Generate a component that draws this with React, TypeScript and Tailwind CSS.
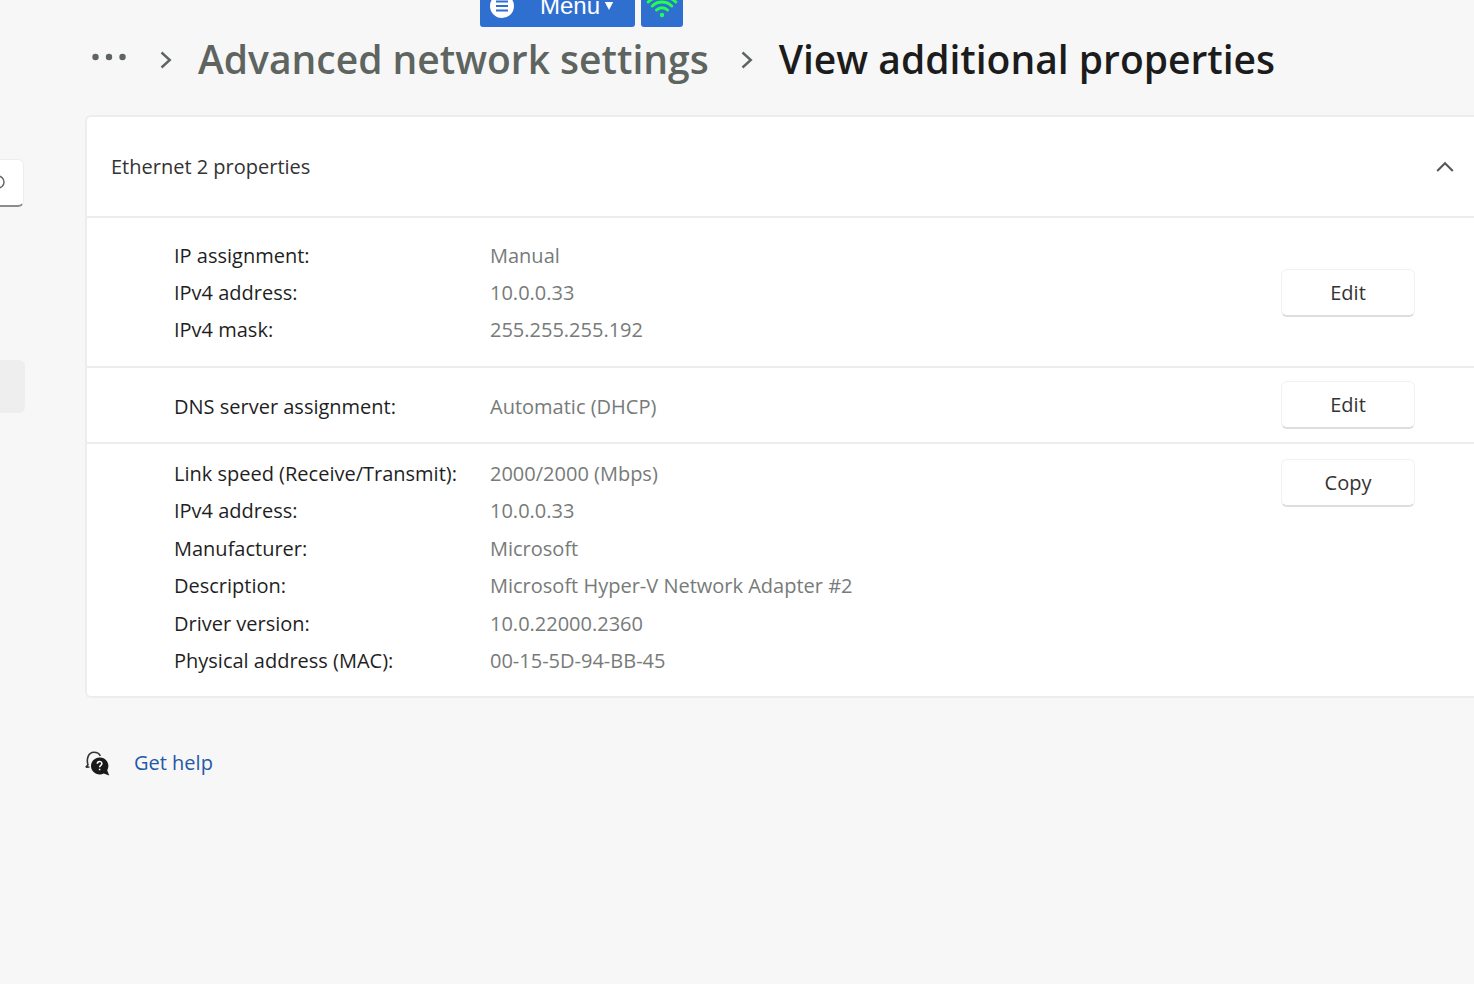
import { Fragment } from "react";

type Row = { label: string; value: string };

const ipRows: Row[] = [
  { label: "IP assignment:", value: "Manual" },
  { label: "IPv4 address:", value: "10.0.0.33" },
  { label: "IPv4 mask:", value: "255.255.255.192" },
];

const dnsRows: Row[] = [{ label: "DNS server assignment:", value: "Automatic (DHCP)" }];

const adapterRows: Row[] = [
  { label: "Link speed (Receive/Transmit):", value: "2000/2000 (Mbps)" },
  { label: "IPv4 address:", value: "10.0.0.33" },
  { label: "Manufacturer:", value: "Microsoft" },
  { label: "Description:", value: "Microsoft Hyper-V Network Adapter #2" },
  { label: "Driver version:", value: "10.0.22000.2360" },
  { label: "Physical address (MAC):", value: "00-15-5D-94-BB-45" },
];

function Properties({ rows, className }: { rows: Row[]; className: string }) {
  return (
    <dl className={`grid flex-1 auto-rows-fr grid-cols-[316px_1fr] items-center ${className}`}>
      {rows.map((row) => (
        <Fragment key={row.label}>
          <dt className="whitespace-nowrap text-[#1f1f1f]">{row.label}</dt>
          <dd className="text-[#777b79]">{row.value}</dd>
        </Fragment>
      ))}
    </dl>
  );
}

function ActionButton({ children }: { children: string }) {
  return (
    <button
      type="button"
      className="h-12 w-[134px] shrink-0 rounded-md border border-[#f0f2f1] border-b-2 border-b-[#dcdedd] bg-white text-[#333]"
    >
      {children}
    </button>
  );
}

function Chevron() {
  return (
    <svg viewBox="0 0 12 18" className="h-[18px] w-3" fill="none" stroke="#5e6460" strokeWidth="2.4" aria-hidden="true">
      <path d="M1.500 1.500 9.800 9l-8.300 7.500" />
    </svg>
  );
}

function RemoteMenu() {
  return (
    <div className="absolute -top-4 left-[480px] flex gap-1.5 font-['Liberation_Sans',sans-serif]">
      <button type="button" className="flex h-[43px] w-[155px] items-center rounded-[3px] bg-[#2f6fd0] pl-2.5 text-2xl text-white">
        <svg viewBox="0 0 24 24" className="size-6" aria-hidden="true">
          <circle cx="12" cy="12" r="12" fill="#fff" />
          <path d="M6 7.500h12M6 12h12M6 16.500h12" stroke="#2f6fd0" strokeWidth="2" />
        </svg>
        <span className="ml-[26px]">Menu</span>
        <svg viewBox="0 0 10 8" className="ml-1 h-2 w-2.5" aria-hidden="true">
          <path d="M.8 0h8.400L5 8z" fill="#fff" />
        </svg>
      </button>
      <button type="button" aria-label="Connection quality" className="flex h-[43px] w-[42px] items-end justify-center rounded-[3px] bg-[#2f6fd0] pb-2">
        <svg viewBox="0 0 36 28" className="h-7 w-9" fill="none" stroke="#22ff4e" strokeWidth="3" strokeLinecap="round" aria-hidden="true">
          <path d="M12.500 19a8 8 0 0 1 11 0M8.300 15a14 14 0 0 1 19.400 0M4.200 11a20 20 0 0 1 27.600 0" />
          <circle cx="18" cy="24" r="2.200" fill="#22ff4e" stroke="none" />
        </svg>
      </button>
    </div>
  );
}

export default function App() {
  return (
    <div className="relative flex min-h-screen overflow-hidden bg-[#f7f7f7] font-['Open_Sans','Noto_Sans',sans-serif] text-xl">
      <RemoteMenu />

      <aside className="w-[85px] shrink-0 pt-[159px]">
        <button
          type="button"
          aria-label="Search"
          className="flex h-12 w-6 items-center rounded-r-md border border-l-0 border-[#ededed] border-b-2 border-b-[#8c8c8c] bg-white"
        >
          <svg viewBox="0 0 8 16" className="h-4 w-2" fill="none" stroke="#666" strokeWidth="1.500" aria-hidden="true">
            <circle cx="-2" cy="7" r="6" />
          </svg>
        </button>
        <button type="button" aria-label="Network" className="mt-[153px] block h-[53px] w-[25px] rounded-r-md bg-[#eeeeee]" />
      </aside>

      <main className="min-w-0 flex-1">
        <nav aria-label="Breadcrumb" className="flex h-[115px] items-center whitespace-nowrap pl-[7px] pt-1 text-[39px] font-semibold">
          <button type="button" aria-label="More">
            <svg viewBox="0 0 36 16" className="h-4 w-9" fill="#5e6460" aria-hidden="true">
              <circle cx="3.500" cy="5" r="3.200" />
              <circle cx="17" cy="5" r="3.200" />
              <circle cx="30.500" cy="5" r="3.200" />
            </svg>
          </button>
          <span className="ml-8">
            <Chevron />
          </span>
          <a href="#advanced" className="ml-[26px] text-[#5e6460]">
            Advanced network settings
          </a>
          <span className="ml-8">
            <Chevron />
          </span>
          <h1 className="ml-[26px] text-[#1c1c1c]">View additional properties</h1>
        </nav>

        <section className="divide-y-2 divide-[#eceeed] rounded-l-md border-y-2 border-l-2 border-[#eceeed] bg-white">
          <button type="button" aria-expanded="true" className="flex h-[101px] w-full items-center justify-between pl-6 pr-5 text-[#333]">
            <span>Ethernet 2 properties</span>
            <svg viewBox="0 0 18 12" className="h-3 w-[18px]" fill="none" stroke="#555" strokeWidth="2" aria-hidden="true">
              <path d="M1.200 10 9 2.200l7.800 7.800" />
            </svg>
          </button>
          <div className="flex items-center pb-[17px] pl-[87px] pr-[59px] pt-[19px]">
            <Properties rows={ipRows} className="min-h-[112px]" />
            <ActionButton>Edit</ActionButton>
          </div>
          <div className="flex items-center py-[13px] pl-[87px] pr-[59px]">
            <Properties rows={dnsRows} className="pt-1" />
            <ActionButton>Edit</ActionButton>
          </div>
          <div className="flex items-start pb-4 pl-[87px] pr-[59px] pt-[11px]">
            <Properties rows={adapterRows} className="min-h-[225px]" />
            <div className="flex pt-1">
              <ActionButton>Copy</ActionButton>
            </div>
          </div>
        </section>

        <a href="#help" className="mt-[51px] inline-flex items-center gap-6 text-[#2459a6]">
          <svg viewBox="0 0 25 25" className="size-[25px]" fill="none" aria-hidden="true">
            <path d="M.8 16.200 3 13.800C1.200 8 3.200 1.200 9 1.200c3 0 5.200 1.300 6.300 3.600M.8 16.200 4.500 16" stroke="#333" strokeWidth="1.600" />
            <path d="M14.500 6.500a8.500 8.500 0 1 0 4.200 15.900l5.500 2.100-2-5.300A8.500 8.500 0 0 0 14.500 6.500z" fill="#1a1a1a" />
            <path d="M12.300 12.700c0-3 4.600-2.900 4.600-.2 0 1.800-2.300 1.900-2.300 3.700M14.600 17.700v1.600" stroke="#fff" strokeWidth="1.500" />
          </svg>
          Get help
        </a>
      </main>
    </div>
  );
}
